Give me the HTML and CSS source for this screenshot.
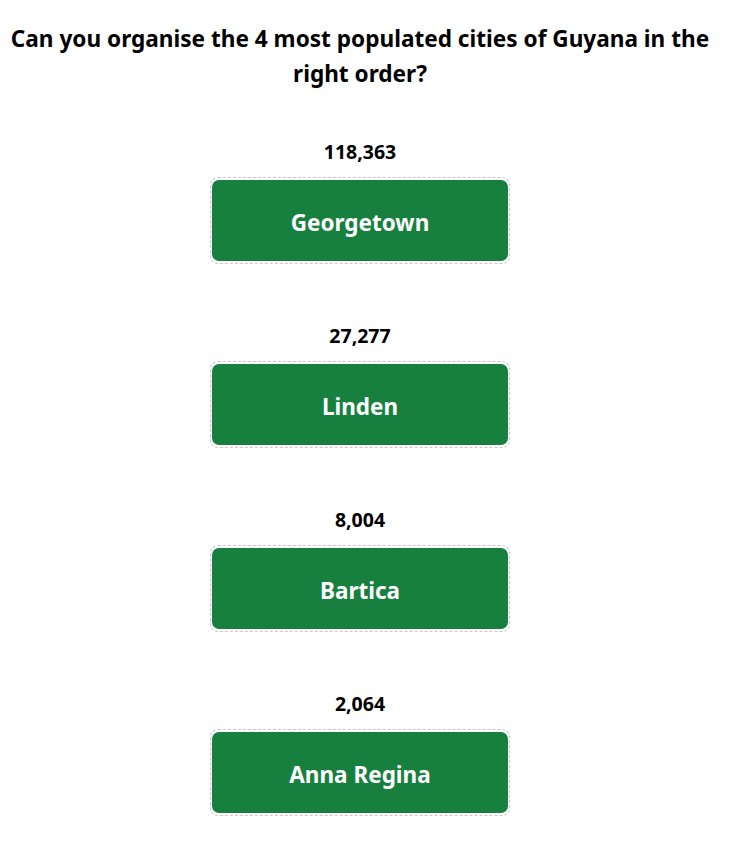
FILE: index.html
```html
<!DOCTYPE html>
<html lang="en">
<head>
    <meta charset="UTF-8">
    <meta name="viewport" content="width=device-width, initial-scale=1.0">
    <title>Guyana cities quiz</title>
    <link rel="stylesheet" href="styles.css">
</head>
<body>

<div class="quiz">
    <h2 class="question">Can you organise the 4 most populated cities of Guyana in the right order?</h2>

    <div class="slots">
        <div class="slot">
            <div class="population">118,363</div>
            <div class="drop-zone">
                <button class="city">Georgetown</button>
            </div>
        </div>
        <div class="slot">
            <div class="population">27,277</div>
            <div class="drop-zone">
                <button class="city">Linden</button>
            </div>
        </div>
        <div class="slot">
            <div class="population">8,004</div>
            <div class="drop-zone">
                <button class="city">Bartica</button>
            </div>
        </div>
        <div class="slot">
            <div class="population">2,064</div>
            <div class="drop-zone">
                <button class="city">Anna Regina</button>
            </div>
        </div>
    </div>
</div>

</body>
</html>
```

FILE: styles.css
```css
body, html {
    margin: 0;
    font-family: "Noto Sans", "Open Sans", Arial, sans-serif;
    background-color: #fff;
    color: #000;
}

.quiz {
    width: 720px;
    box-sizing: border-box;
    padding: 21px 6px 0;
    text-align: center;
}

.question {
    margin: 0 0 49px;
    font-size: 22.6px;
    line-height: 35px;
    font-weight: bold;
}

.slots {
    display: flex;
    flex-direction: column;
    align-items: center;
    gap: 60px;
}

.slot {
    display: flex;
    flex-direction: column;
    align-items: center;
    gap: 13px;
}

.population {
    font-size: 19.5px;
    line-height: 24px;
    font-weight: bold;
}

.drop-zone {
    width: 296px;
    padding: 2px 1px;
    border: 1px dashed #c8c8c8;
    border-radius: 8px;
}

.city {
    display: block;
    width: 100%;
    height: 81px;
    padding: 3px 0 0;
    border: none;
    border-radius: 7px;
    background-color: #17803f;
    color: #fff;
    font-family: inherit;
    font-size: 22.5px;
    font-weight: bold;
    cursor: grab;
}
```
